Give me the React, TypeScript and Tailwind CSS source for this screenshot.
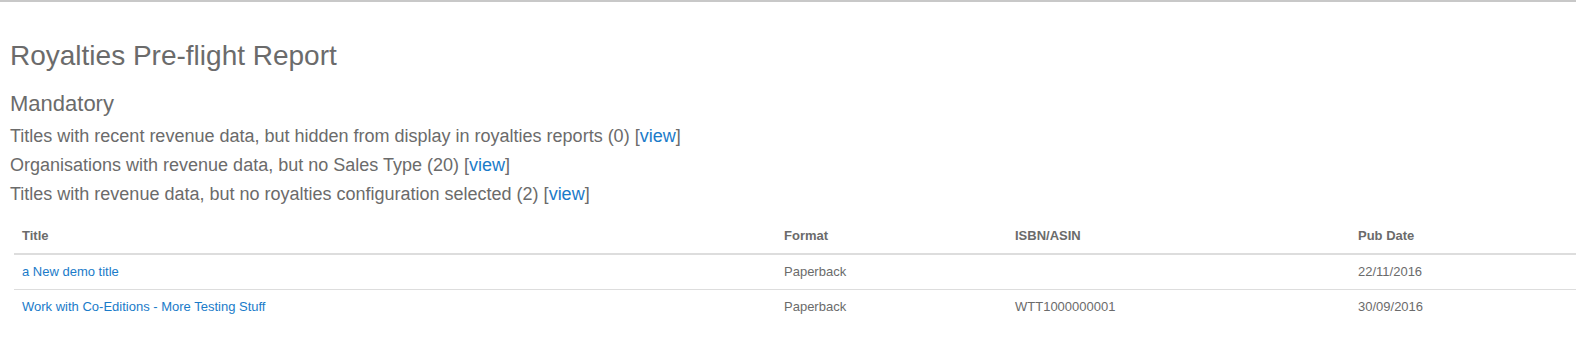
import React from "react";

const rows = [
  { title: "a New demo title", format: "Paperback", isbn: "", date: "22/11/2016" },
  { title: "Work with Co-Editions - More Testing Stuff", format: "Paperback", isbn: "WTT1000000001", date: "30/09/2016" },
];

export default function App() {
  return (
    <div className="min-h-[351px] bg-white border-t-2 border-[#c8c8c8] text-[#6b6b6b] font-['Liberation_Sans',Arial,sans-serif]">
      <div className="pl-[10px] pt-[38px]">
        <h1 className="text-[28px] leading-[32px]">Royalties Pre-flight Report</h1>
        <h2 className="mt-[19px] text-[22px] leading-[26px]">Mandatory</h2>
        <div className="mt-[5px] text-[18px] leading-[29px]">
          <div>
            Titles with recent revenue data, but hidden from display in royalties reports (0) [<a className="text-[#1a7bc9]" href="#">view</a>]
          </div>
          <div>
            Organisations with revenue data, but no Sales Type (20) [<a className="text-[#1a7bc9]" href="#">view</a>]
          </div>
          <div>
            Titles with revenue data, but no royalties configuration selected (2) [<a className="text-[#1a7bc9]" href="#">view</a>]
          </div>
        </div>
      </div>
      <div className="ml-[14px] mt-[10px] text-[13px] leading-[18px]">
        <div className="grid grid-cols-[762px_231px_343px_1fr] border-b-2 border-[#ddd] font-bold">
          <div className="p-2">Title</div>
          <div className="p-2">Format</div>
          <div className="p-2">ISBN/ASIN</div>
          <div className="p-2">Pub Date</div>
        </div>
        {rows.map((r, i) => (
          <div key={i} className={`grid grid-cols-[762px_231px_343px_1fr] ${i > 0 ? "border-t border-[#ddd]" : ""}`}>
            <div className="p-2"><a className="text-[#1a7bc9]" href="#">{r.title}</a></div>
            <div className="p-2">{r.format}</div>
            <div className="p-2">{r.isbn}</div>
            <div className="p-2">{r.date}</div>
          </div>
        ))}
      </div>
    </div>
  );
}
